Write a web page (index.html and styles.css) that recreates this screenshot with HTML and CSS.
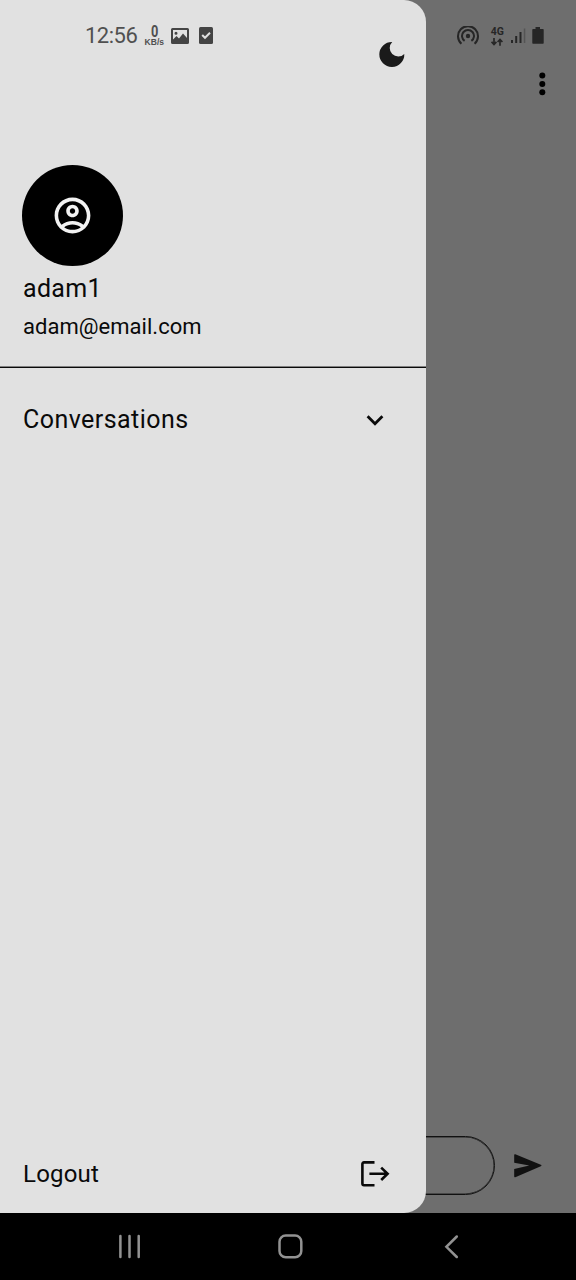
FILE: index.html
```html
<!DOCTYPE html>
<html lang="en">
<head>
<meta charset="utf-8">
<title>Chat</title>
<link rel="stylesheet" href="styles.css">
</head>
<body>
<div class="phone">
  <main class="screen">
    <header class="app-bar">
      <svg class="more" width="10" height="26" viewBox="0 0 10 26"><circle cx="5.3" cy="4.5" r="3"/><circle cx="5.3" cy="12.9" r="3"/><circle cx="5.3" cy="21.2" r="3"/></svg>
    </header>
    <footer class="composer">
      <div class="message-field"></div>
      <svg class="send" width="28" height="24" viewBox="0 0 28 24"><path d="M.2 1Q.2-.1 1.3.3L26.8 10.8Q28.2 11.5 26.8 12.2L1.3 23.2Q.2 23.6.2 22.5V15L15.3 11.5.2 8.8Z"/></svg>
    </footer>

    <aside class="drawer">
      <div class="drawer-top">
        <svg class="moon" width="26" height="27" viewBox="0 0 26 27"><path d="M13.2.9A12.5 12.5 0 1 0 25.3 12.9 7.8 7.8 0 1 1 13.2.9Z"/></svg>
      </div>
      <section class="profile">
        <div class="avatar">
          <svg width="43" height="43" viewBox="0 0 24 24"><path d="M12 2C6.48 2 2 6.48 2 12s4.48 10 10 10 10-4.48 10-10S17.52 2 12 2zM7.35 18.5C8.66 17.56 10.26 17 12 17s3.34.56 4.65 1.5C15.34 19.44 13.74 20 12 20s-3.34-.56-4.65-1.5zm10.79-1.38C16.45 15.8 14.32 15 12 15s-4.45.8-6.14 2.12C4.7 15.73 4 13.95 4 12c0-4.42 3.58-8 8-8s8 3.58 8 8c0 1.95-.7 3.73-1.86 5.12zM12 6c-1.93 0-3.5 1.57-3.5 3.5S10.07 13 12 13s3.5-1.57 3.5-3.5S13.93 6 12 6zm0 5c-.83 0-1.5-.67-1.5-1.5S11.17 8 12 8s1.5.67 1.5 1.5S12.83 11 12 11z"/></svg>
        </div>
        <div class="name">adam1</div>
        <div class="email">adam@email.com</div>
      </section>
      <div class="row">
        <span class="row-label">Conversations</span>
        <svg class="chevron" width="18" height="12" viewBox="0 0 18 12"><path d="M1.6 2.3 9 9.7l7.4-7.4"/></svg>
      </div>
      <div class="row logout">
        <span class="row-label">Logout</span>
        <svg class="exit" width="30" height="26" viewBox="0 0 30 26"><path d="M14.5 1.4H4Q2.4 1.4 2.4 3V22.6Q2.4 24.2 4 24.2H14.5M9.4 12.8H27.6M21.2 6.6l6.4 6.2-6.4 6.2"/></svg>
      </div>
    </aside>

    <div class="status-bar">
      <div class="status-left">
        <span class="clock">12:56</span>
        <span class="speed"><b class="speed-value">0</b><b class="speed-unit">KB/s</b></span>
        <svg class="picture" width="18" height="16" viewBox="0 0 18 16"><path fill-rule="evenodd" d="M1.5 0h15Q18 0 18 1.5v13Q18 16 16.5 16h-15Q0 16 0 14.5v-13Q0 0 1.5 0ZM2 2V11.500L5.500 8 8 10.500 12 5.500 16 10V2ZM5 3.800a1.500 1.500 0 1 1 0 3 1.500 1.500 0 0 1 0-3Z"/></svg>
        <svg class="task" width="14" height="18" viewBox="0 0 14 18"><rect width="14" height="17" rx="1.5"/><path class="tick" d="m3.200 8 2.800 2.800 5-5"/></svg>
      </div>
      <div class="status-right">
        <svg class="hotspot" width="22" height="20" viewBox="0 0 22 20"><circle cx="11" cy="10" r="2.200"/><path class="wave" d="M7.600 14.900a6 6 0 1 1 6.800 0M4.400 17.700a10 10 0 1 1 13.200 0"/></svg>
        <span class="network"><b>4G</b><svg width="12" height="8" viewBox="0 0 12 8"><path d="M3 0v6M.6 3.800 3 6.400l2.400-2.600M9 7.800V1.600M6.600 4 9 1.400 11.400 4"/></svg></span>
        <svg class="signal" width="15" height="17" viewBox="0 0 15 17"><path d="M0 12h2v3H0ZM4.200 8h2v7h-2ZM8.500 4h2v11h-2Z"/><path class="faint" d="M12.800.5h1.500V15h-1.500Z"/></svg>
        <svg class="battery" width="12" height="18" viewBox="0 0 12 18"><path d="M3.500 0h4.500V2H11q.7 0 .7.7V16q0 .8-.7.8H1q-.7 0-.7-.8V2.700q0-.7.7-.7H3.500Z"/></svg>
      </div>
    </div>
  </main>

  <nav class="nav-bar">
    <svg width="24" height="26" viewBox="0 0 24 26"><path d="M2.400 2v21M11.500 2v21M20.700 2v21"/></svg>
    <svg width="26" height="26" viewBox="0 0 26 26"><rect x="1.500" y="1.500" width="21.800" height="21.800" rx="6.200"/></svg>
    <svg width="16" height="26" viewBox="0 0 16 26"><path d="M12.800 2.500 2.400 12.800l10.400 10.200"/></svg>
  </nav>
</div>
</body>
</html>
```
FILE: styles.css
```css
* { box-sizing: border-box; }

body {
  margin: 0;
  font-family: Roboto, "Liberation Sans", sans-serif;
  color: #0a0a0a;
  background: #000;
}

svg { display: block; flex: none; }

.phone {
  width: 576px;
  height: 1280px;
  display: flex;
  flex-direction: column;
  overflow: hidden;
}

.screen {
  position: relative;
  height: 1213px;
  display: flex;
  flex-direction: column;
  justify-content: space-between;
  background: #6e6e6e;
}

.app-bar {
  display: flex;
  justify-content: flex-end;
  padding: 71px 29px 0 0;
}

.composer {
  display: flex;
  align-items: center;
  gap: 19px;
  padding: 0 34px 18px 20px;
}

.message-field {
  flex: 1;
  height: 59px;
  border: 1px solid #111;
  border-radius: 30px;
  box-shadow: inset 0 0 0 .5px #222;
}

.send { fill: #111; }

/* Drawer slides over the conversation screen */
.drawer {
  position: absolute;
  inset: 0 auto 0 0;
  width: 426px;
  display: flex;
  flex-direction: column;
  background: #e1e1e1;
  border-radius: 0 22px 22px 0;
}

.drawer-top {
  height: 165px;
  display: flex;
  justify-content: flex-end;
  padding: 41px 21px 0 0;
}

.moon { fill: #1a1a1a; }

.profile {
  height: 203px;
  padding-left: 22px;
  border-bottom: 1px solid #0a0a0a;
  box-shadow: inset 0 -1px #808080;
}

.avatar {
  width: 101px;
  height: 101px;
  display: flex;
  align-items: center;
  justify-content: center;
  border-radius: 50%;
  background: #000;
}

.avatar svg { fill: #f2f2f2; }

.name {
  margin: 8px 0 0 1px;
  font-size: 25px;
  line-height: 30px;
  letter-spacing: .3px;
}

.email {
  margin: 10px 0 0 1px;
  font-size: 22px;
  line-height: 26px;
  letter-spacing: .03px;
}

.row {
  height: 104px;
  display: flex;
  align-items: center;
  justify-content: space-between;
  padding: 0 42px 0 23px;
}

.row-label {
  font-size: 25px;
  line-height: 30px;
  letter-spacing: .45px;
}

.chevron { fill: none; stroke: #0a0a0a; stroke-width: 2.8; }

.logout {
  height: 78px;
  margin-top: auto;
  padding-right: 36px;
}

.logout .row-label {
  font-size: 24px;
  letter-spacing: .2px;
}

.exit { fill: none; stroke: #0a0a0a; stroke-width: 2.6; }

/* System status bar overlays the drawer and the screen */
.status-bar {
  position: absolute;
  inset: 0 0 auto;
  height: 72px;
  display: flex;
  align-items: center;
  justify-content: space-between;
  padding: 0 32px 0 85px;
}

.status-left,
.status-right { display: flex; align-items: center; }

.status-left { color: #505050; fill: #444; }
.status-right { color: #262626; fill: #262626; }

.clock { font-size: 22px; line-height: 28px; letter-spacing: -.5px; }

.speed {
  width: 20px;
  margin-left: 7px;
  display: flex;
  flex-direction: column;
  align-items: center;
}

.speed-value {
  font-size: 16px;
  line-height: 13px;
  transform: scaleX(.8);
}

.speed-unit { font: bold 8.5px/9px "Liberation Sans", sans-serif; }

.picture { margin-left: 7px; }
.task { margin-left: 10px; }
.tick { fill: none; stroke: #e1e1e1; stroke-width: 2; }

.wave { fill: none; stroke: #262626; stroke-width: 2; }

.network {
  margin-left: 12px;
  display: flex;
  flex-direction: column;
  align-items: center;
  gap: 1px;
  font-size: 10.5px;
  line-height: 10px;
}

.network svg { fill: none; stroke: #262626; stroke-width: 1.7; }
.signal { margin-left: 7px; }
.faint { fill: #555; }
.battery { margin-left: 6px; }

.nav-bar {
  height: 67px;
  display: grid;
  grid-template-columns: repeat(3, 161px);
  align-items: center;
  justify-items: center;
  padding-left: 49px;
  background: #000;
  fill: none;
  stroke: #929292;
  stroke-width: 2.5;
  stroke-linecap: round;
}
```
